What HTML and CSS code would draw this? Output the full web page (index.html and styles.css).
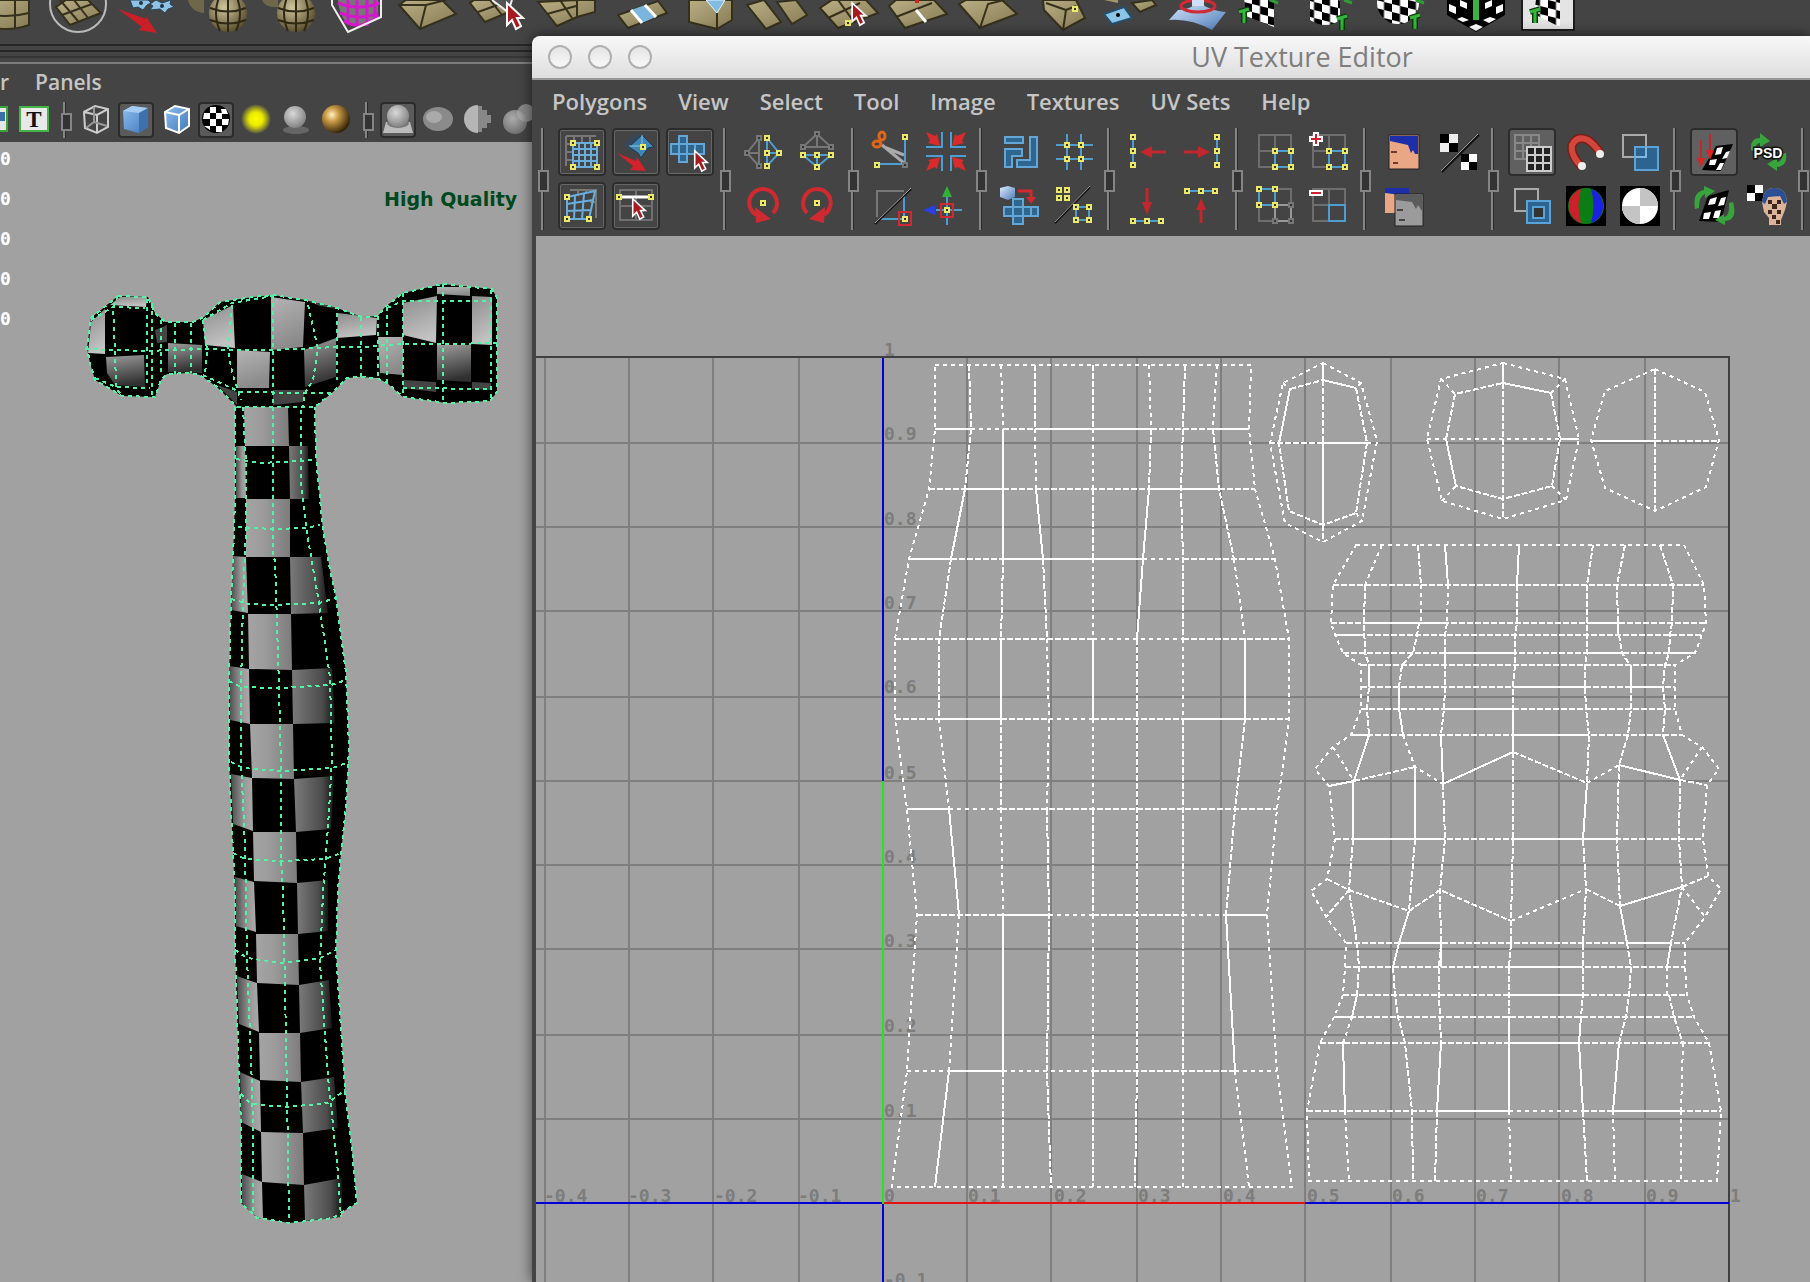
FILE: index.html
```html
<!DOCTYPE html>
<html lang="en">
<head>
<meta charset="utf-8">
<title>UV Texture Editor</title>
<link rel="stylesheet" href="styles.css">
</head>
<body>
<svg class="defs" aria-hidden="true">
  <defs>
    <linearGradient id="tan" x1="0" y1="0" x2="1" y2="1"><stop offset="0" stop-color="#b9ae84"/><stop offset="1" stop-color="#857a52"/></linearGradient>
    <radialGradient id="tanball" cx=".4" cy=".35" r=".65"><stop offset="0" stop-color="#d0c69c"/><stop offset="1" stop-color="#5c5130"/></radialGradient>
    <linearGradient id="sky" x1="0" y1="0" x2="1" y2="1"><stop offset="0" stop-color="#dcebff"/><stop offset="1" stop-color="#4f7db8"/></linearGradient>
    <linearGradient id="cubeface" x1="0" y1="0" x2="1" y2="1"><stop offset="0" stop-color="#8dbdf0"/><stop offset="1" stop-color="#4079b9"/></linearGradient>
    <radialGradient id="glow"><stop offset="0" stop-color="#ff0"/><stop offset=".45" stop-color="#eaea00"/><stop offset="1" stop-color="#ff0" stop-opacity="0"/></radialGradient>
    <radialGradient id="grayball" cx=".4" cy=".35" r=".65"><stop offset="0" stop-color="#d8d8d8"/><stop offset="1" stop-color="#848484"/></radialGradient>
    <radialGradient id="goldball" cx=".35" cy=".35" r=".7"><stop offset="0" stop-color="#fff2c0"/><stop offset=".35" stop-color="#c99a45"/><stop offset="1" stop-color="#2e1d05"/></radialGradient>
    <pattern id="check" width="16" height="16" patternUnits="userSpaceOnUse" patternTransform="skewY(14)"><rect width="16" height="16"/><path fill="#fff" d="M0 0h8v8h-8zM8 8h8v8h-8z"/></pattern>
    <symbol id="cursor" viewBox="0 0 20 28" overflow="visible"><path d="M2 1v22l5-5 4 9 5-3-4-8h6z" fill="#a91a20" stroke="#fff" stroke-width="2"/></symbol>
    <symbol id="pt" viewBox="-3 -3 6 6" overflow="visible"><path d="M-2-2H2V2H-2z" fill="#333" stroke="#ece86a" stroke-width="2"/></symbol>
    <symbol id="gpt" viewBox="-3 -3 6 6" overflow="visible"><path d="M-2-2H2V2H-2z" fill="#333" stroke="#777" stroke-width="2"/></symbol>
    <symbol id="tee" viewBox="0 0 14 16" overflow="visible"><path d="M2 4l10-3M7 3v12" fill="none" stroke="#0a3d0a" stroke-width="6"/><path d="M2 4l10-3M7 3v12" fill="none" stroke="#37b53c" stroke-width="3"/></symbol>
    <symbol id="in" viewBox="0 0 14 14" overflow="visible"><path d="M0 0L9 4L11 2L14 14L2 11L4 9z" fill="#d92b2b"/></symbol>
    <linearGradient id="cellb"><stop offset="0" stop-color="#a4a4a4"/><stop offset=".4" stop-color="#9b9b9b"/><stop offset="1" stop-color="#7c7c7c"/></linearGradient>
    <linearGradient id="cella"><stop offset="0" stop-color="#4c4c4c"/><stop offset=".6" stop-color="#999"/><stop offset="1" stop-color="#aaa"/></linearGradient>
    <linearGradient id="cellc"><stop offset="0" stop-color="#7a7a7a"/><stop offset=".7" stop-color="#4c4c4c"/><stop offset="1" stop-color="#161616"/></linearGradient>
    <linearGradient id="lit" x1="0" y1="0" x2=".3" y2="1"><stop offset="0" stop-color="#8c8c8c"/><stop offset="1" stop-color="#c2c2c2"/></linearGradient>
    <linearGradient id="mid" x1="0" y1="0" x2=".3" y2="1"><stop offset="0" stop-color="#b4b4b4"/><stop offset="1" stop-color="#8a8a8a"/></linearGradient>
    <linearGradient id="dim" x1="0" y1="0" x2=".2" y2="1"><stop offset="0" stop-color="#9c9c9c"/><stop offset="1" stop-color="#303030"/></linearGradient>
  </defs>
</svg>

<main class="desktop">
  <div class="shelf" role="toolbar" aria-label="Polygon shelf">
    <button aria-label="Cylinder"><svg><path d="M8 0h45v25q-22 8-45 0z" fill="url(#tan)" stroke="#35301c" stroke-width="2"/><path d="M22 0v28M39 0v28M8 13q22 6 45 0" fill="none" stroke="#35301c" stroke-width="2"/></svg></button>
    <button aria-label="Plane"><svg><circle cx="32" cy="4" r="28" fill="none" stroke="#bbb" stroke-width="2"/><path d="M10 7L24 25L55 13L42 0H20z" fill="url(#tan)" stroke="#35301c" stroke-width="2"/><path d="M16 15l30-11M28 0l14 18M14 0l18 21" stroke="#35301c" stroke-width="2"/></svg></button>
    <button aria-label="Extract"><svg><path d="M14 0L17 8L22 7L27 10L31 5L35 3L32 0zM34 4L37 6L34 10L44 9L49 13L52 9L58 7L54 4L55 0L46 3L40 0z" fill="#8ec3e4" stroke="#27455c"/><circle cx="25" cy="3" r="2" fill="#234"/><circle cx="46" cy="6" r="2" fill="#234"/><path d="M2 9L30 19L29 15L41 33L22 30L26 27z" fill="#cb1f28"/></svg></button>
    <button aria-label="Smooth"><svg><path d="M2 0q3 12 16 13V0z" fill="#6f6749"/><circle cx="42" cy="13" r="19" fill="url(#tanball)"/><path d="M24 8q18 7 36 0M24 20q18 7 36 0M42-6v38M34-5q-8 18 0 36M50-5q8 18 0 36" fill="none" stroke="#2e2814" stroke-width="2"/></svg></button>
    <button aria-label="Average"><svg><path d="M6 0q3 8 16 7V0z" fill="#6f6749"/><circle cx="40" cy="13" r="19" fill="url(#tanball)"/><path d="M22 8q18 7 36 0M22 20q18 7 36 0M40-6v38M32-5q-8 18 0 36M48-5q8 18 0 36" fill="none" stroke="#2e2814" stroke-width="2"/></svg></button>
    <button aria-label="Cage"><svg><path d="M12 0H52V15Q38 30 20 22Q13 14 12 0z" fill="#777"/><path d="M12 3q20 8 42 0M14 13q20 8 38 0M22 0v24M31 0v26M41 0v26M49 0v20M18 21q18 11 34-6" fill="none" stroke="#d416cc" stroke-width="3"/><path d="M6 0v5L22 32L55 17V0" fill="none" stroke="#eee" stroke-width="2"/></svg></button>
    <button aria-label="Poke"><svg><path d="M3 5L24 29L60 14L46 0H10z" fill="url(#tan)" stroke="#35301c" stroke-width="2"/><path d="M24 29L30 5M30 5L50 0M30 5L3 5" stroke="#35301c" stroke-width="2"/></svg></button>
    <button aria-label="Split"><svg><path d="M4 3L19 22L48 10L38 0H8z" fill="url(#tan)" stroke="#35301c" stroke-width="2"/><path d="M12 12L40 2M24 0l12 15" stroke="#35301c" stroke-width="2"/><path d="M26 0L42 12L46 0" fill="#555" stroke="#eee" stroke-width="2"/><use href="#cursor" x="39" y="2" width="20" height="28"/></svg></button>
    <button aria-label="Bevel"><svg><path d="M2 2L21 26L41 17V0zM41 17L59 12V0H41z" fill="url(#tan)" stroke="#35301c" stroke-width="2"/><path d="M11 14L40 6M24 0l12 18" stroke="#35301c" stroke-width="2"/></svg></button>
    <button aria-label="Bridge"><svg><path d="M12 15L22 28L61 13L52 1z" fill="url(#tan)" stroke="#35301c" stroke-width="2"/><path d="M25 10L36 23L50 17L39 5z" fill="#7bb5de"/><path d="M25 10L36 23M39 5L50 17" stroke="#fff" stroke-width="3"/></svg></button>
    <button aria-label="Wedge"><svg><path d="M13 0V22L41 29V0zM41 29L56 20V0H41z" fill="url(#tan)" stroke="#35301c" stroke-width="2"/><path d="M30 0L41 13L49 0z" fill="#83bce3" stroke="#e6f2fb"/></svg></button>
    <button aria-label="Detach"><svg><path d="M1 5L20 29L35 22L18 0zM31 2L46 24L61 15L50 0z" fill="url(#tan)" stroke="#35301c" stroke-width="2"/></svg></button>
    <button aria-label="Merge"><svg><path d="M4 8L22 28L62 13L50 0H16z" fill="url(#tan)" stroke="#35301c" stroke-width="2"/><path d="M12 18L44 3M22 0l16 22" stroke="#35301c" stroke-width="2"/><use href="#pt" x="29" y="20" width="6" height="6"/><use href="#cursor" x="34" y="2" width="18" height="24"/></svg></button>
    <button aria-label="Insert edge"><svg><path d="M3 6L19 28L61 14L48 0H10z" fill="url(#tan)" stroke="#35301c" stroke-width="2"/><path d="M10 17L46 3" stroke="#35301c" stroke-width="2"/><path d="M30 10L40 22" stroke="#fff" stroke-width="3"/><path d="M31 0v3" stroke="#c22" stroke-width="4"/></svg></button>
    <button aria-label="Triangulate"><svg><path d="M3 4L24 28L61 14L46 0H10z" fill="url(#tan)" stroke="#35301c" stroke-width="2"/><path d="M24 28L32 4L48 0" fill="none" stroke="#35301c" stroke-width="2"/></svg></button>
    <button aria-label="Chamfer"><svg><path d="M17 0L18 10L37 30L59 18L50 0z" fill="url(#tan)" stroke="#35301c" stroke-width="2"/><path d="M37 30L40 10L50 6M40 10L20 3" fill="none" stroke="#35301c" stroke-width="2"/><use href="#pt" x="46" y="6" width="6" height="6"/></svg></button>
    <button aria-label="Duplicate face"><svg><path d="M8 14L16 24L36 18L28 7z" fill="#8cc4e8" stroke="#25506e" stroke-width="2"/><circle cx="22" cy="15" r="2"/><path d="M36 3L44 12L60 5L56 0z" fill="url(#tan)" stroke="#35301c" stroke-width="2"/><path d="M8 0h14v3z" fill="#a1966c"/></svg></button>
    <button aria-label="Soft select"><svg><path d="M12 10L3 20Q24 18 46 30L60 12Q40 10 32 0Q28 9 12 10z" fill="url(#sky)"/><ellipse cx="32" cy="6" rx="17" ry="6" fill="none" stroke="#d12a35" stroke-width="3"/><path d="M26 0h12v6h-12z" fill="#cfe0f5"/></svg></button>
    <button aria-label="Planar mapping"><svg><path d="M8 0L10 16L38 27V0z" fill="url(#check)"/><use href="#tee" x="1" y="8" width="14" height="16"/><path d="M34 0l8 3" stroke="#2f9d35" stroke-width="3"/></svg></button>
    <button aria-label="Cylindrical mapping"><svg><path d="M4 0V20Q20 30 34 20V0z" fill="url(#check)"/><use href="#tee" x="29" y="15" width="14" height="16"/><path d="M38 0l8 3" stroke="#2f9d35" stroke-width="3"/></svg></button>
    <button aria-label="Spherical mapping"><svg><circle cx="22" cy="3" r="21" fill="url(#check)"/><use href="#tee" x="32" y="14" width="14" height="16"/><path d="M40 0l8 3" stroke="#2f9d35" stroke-width="3"/></svg></button>
    <button aria-label="Automatic mapping"><svg><path d="M1 0V15L30 32L59 15V0z" fill="#000"/><path d="M3 4l7 3v7l-7-3zM14 0l7 3v6l-7-3zM57 4l-7 3v7l7-3zM46 0l-7 3v6l7-3zM30 24l7 3-7 4-7-4zM16 17l7 3-6 2-6-3zM44 17l6 2-7 4-6-3z" fill="#fff"/><path d="M30 0v20" stroke="#3bb342" stroke-width="6"/></svg></button>
    <button aria-label="Best plane mapping"><svg><path d="M6-4H58V30H6z" fill="#e4e4e4" stroke="#1d1d1d" stroke-width="2"/><path d="M20 0L18 14L44 27V0z" fill="url(#check)"/><use href="#tee" x="12" y="8" width="14" height="16"/></svg></button>
  </div>
  <div class="rails"><i></i><i></i><i></i></div>
  <nav class="panelmenu"><button>r</button><button>Panels</button></nav>
  <div class="paneltools" role="toolbar" aria-label="Viewport display">
    <button aria-label="Image plane"><svg><rect x="2" y="5" width="29" height="24" fill="#e5e5e5" stroke="#3aa43a" stroke-width="2"/><rect x="22" y="10" width="7" height="9" fill="#3a6ea5"/></svg></button>
    <button aria-label="Title"><svg><rect x="4" y="5" width="28" height="24" fill="#e9e9e9" stroke="#45b545" stroke-width="2"/><text x="18" y="25" class="tee">T</text></svg></button>
    <span class="vsep"></span>
    <button aria-label="Wireframe"><svg><path d="M6 10L17 4L30 7V25L19 31L7 26zM6 10L19 13L30 7M19 13V31" fill="none" stroke="#ccc" stroke-width="2"/><path d="M16 5V20L8 26M16 20L29 24" fill="none" stroke="#999" stroke-width="2"/></svg></button>
    <button class="on" aria-label="Shaded"><svg><path d="M5 9L14 4L30 6V25L21 31L6 27z" fill="url(#cubeface)"/><path d="M5 9L14 4L30 6L21 11z" fill="#a6ccf5"/><path d="M21 11L30 6V25L21 31z" fill="#3d71ad"/></svg></button>
    <button aria-label="Shaded with wire"><svg><path d="M7 10L17 4L31 7V24L21 31L8 26z" fill="url(#cubeface)"/><path d="M7 10L17 4L31 7V24L21 31L8 26zM7 10L21 13L31 7M21 13V31" fill="none" stroke="#fff" stroke-width="2"/></svg></button>
    <button class="on" aria-label="Textured"><svg><circle cx="18" cy="17" r="14"/><path d="M12 5h6v6h-6zM23 7h5l2 5h-6zM6 11l6 0v6H5zM18 11h6v6h-6zM12 17h6v7h-6zM24 17h7l-1 6h-6zM6 24h6v4zM18 24h6v6h-6z" fill="#fff"/></svg></button>
    <button aria-label="Lights"><svg><circle cx="18" cy="17" r="15" fill="url(#glow)"/></svg></button>
    <button aria-label="Shadows"><svg><ellipse cx="18" cy="28" rx="13" ry="4" fill="#666"/><circle cx="17" cy="15" r="11" fill="url(#grayball)"/></svg></button>
    <button aria-label="Quality"><svg><circle cx="18" cy="17" r="14" fill="url(#goldball)"/></svg></button>
    <span class="vsep"></span>
    <button class="on" aria-label="Isolate"><svg><path d="M6 20H30L33 31H3z" fill="#bbb"/><ellipse cx="18" cy="21" rx="11" ry="5" fill="#777"/><circle cx="18" cy="14" r="11" fill="url(#grayball)"/></svg></button>
    <button aria-label="X-ray"><svg><ellipse cx="18" cy="17" rx="15" ry="12" fill="#8a8a8a"/><ellipse cx="14" cy="15" rx="8" ry="6" fill="#aaa"/></svg></button>
    <button aria-label="X-ray joints"><svg><path d="M18 3a14 14 0 0 0 0 28z" fill="#b5b5b5"/><path d="M18 4h4v4h5v5h4v8h-4v5h-5v4h-4z" fill="#888"/></svg></button>
    <button aria-label="Panels overlap"><svg><circle cx="26" cy="11" r="9" fill="#888"/><circle cx="15" cy="20" r="12" fill="url(#grayball)" opacity=".7"/></svg></button>
  </div>
  <section class="viewport" aria-label="Perspective view">
    <ul class="hud"><li>0</li><li>0</li><li>0</li><li>0</li><li>0</li></ul>
    <p class="quality">High Quality</p>
    <svg class="scene" role="img" aria-label="Hammer model">
      <g transform="translate(0 -142)">
        <path d="M235 407V497L233 560L231 600L229 680V760L233 853L235 893V947L237 1013L239 1080L241 1123V1203L257 1218L290 1223L333 1218L357 1203L352 1150L345 1090L340 1013L336 950L338 890L341 853L346 807L349 747L346 673L336 597L330 570L323 530L316 457L315 407z"/>
        <path d="M118 296L148 297L155 313L165 322H193L204 317L220 302L253 297L273 295L305 300L337 308L362 317L378 316L385 307L403 293L443 284L492 289L497 298V392L490 401L447 403L403 397L387 383L377 378L360 377L347 378L333 392L315 407H237L217 387L200 375L190 373L167 374L161 380L155 397L122 396L95 380L90 363L87 348L91 318z"/>
        <g fill="url(#cellb)">
          <path d="M244 407H288L289 446H245z"/><path d="M246 499H290V557H246z"/><path d="M248 614H291L292 670L249 669z"/><path d="M250 724H293L294 779L252 778z"/><path d="M253 832H296L297 883L254 881z"/><path d="M256 934H298L299 985L257 983z"/><path d="M259 1033H300L301 1082L260 1080z"/><path d="M261 1132L303 1133L304 1185L262 1182z"/>
        </g>
        <g fill="url(#cella)">
          <path d="M236 446H245L246 498H236z"/><path d="M233 556L246 557L248 613L231 610z"/><path d="M229 666L249 669L250 724L230 720z"/><path d="M231 774L252 778L253 831L233 824z"/><path d="M235 877L254 882L256 932L236 926z"/><path d="M237 976L257 983L259 1032L239 1024z"/><path d="M240 1072L260 1081L261 1132L241 1122z"/><path d="M242 1174L262 1182L263 1220L252 1214L242 1203z"/>
        </g>
        <g fill="url(#cellc)">
          <path d="M289 446H308L309 499H290z"/><path d="M290 557H321L328 613L291 614z"/><path d="M292 670L332 668L335 723L293 724z"/><path d="M294 779L334 776L331 829L296 832z"/><path d="M297 883L328 880V931L298 934z"/><path d="M299 985L329 980L332 1028L300 1033z"/><path d="M301 1082L334 1077L338 1128L303 1133z"/><path d="M304 1185L342 1178V1217L305 1221z"/>
        </g>
        <g fill="url(#lit)">
          <path d="M91 322L105 309V354L88 353z"/><path d="M110 305L120 297H147L146 307z"/><path d="M203 320L233 305L235 348L205 345z"/><path d="M338 313L377 318L376 335L337 338z"/><path d="M403 303L437 296L436 343L403 335z"/><path d="M472 296L492 297V345L472 344z"/>
        </g>
        <g fill="url(#mid)">
          <path d="M271 297L305 302L303 347L271 350z"/><path d="M237 350L270 352L269 388H237z"/><path d="M378 337H403V375L380 373z"/><path d="M437 287H470V296L437 294z"/>
        </g>
        <g fill="url(#dim)">
          <path d="M106 357L144 355L145 387L115 385L107 373z"/><path d="M168 343L202 345V373L168 372z"/><path d="M304 350L336 338V377L305 387z"/><path d="M437 345H471V382L437 380z"/>
        </g>
        <g fill="#444">
          <path d="M155 330L167 325V342L157 343z"/><path d="M217 385L237 392V405z"/><path d="M307 301L330 306L337 309L320 306z"/><path d="M273 390H305L303 402L273 405z"/><path d="M403 380L436 382V392L403 388z"/><path d="M472 382L491 383V390L472 389z"/>
        </g>
        <g class="wire">
          <path d="M235 407V497L233 560L231 600L229 680V760L233 853L235 893V947L237 1013L239 1080L241 1123V1203L257 1218L290 1223L333 1218L357 1203L352 1150L345 1090L340 1013L336 950L338 890L341 853L346 807L349 747L346 673L336 597L330 570L323 530L316 457L315 407"/>
          <path d="M118 296L148 297L155 313L165 322H193L204 317L220 302L253 297L273 295L305 300L337 308L362 317L378 316L385 307L403 293L443 284L492 289L497 298V392L490 401L447 403L403 397L387 383L377 378L360 377L347 378L333 392L315 407H237L217 387L200 375L190 373L167 374L161 380L155 397L122 396L95 380L90 363L87 348L91 318z"/>
          <path d="M273 295V557L275 560L279 687L281 770V860L283 890L285 990L287 1090L289 1223"/>
          <path d="M243 407L246 463V527L243 603L241 687V760L245 847L247 957L251 1057L253 1123V1213"/>
          <path d="M301 410V483L307 533L319 603L330 677L332 760L328 827L323 893L320 963L328 1077L338 1173L341 1217"/>
          <path d="M236 459L260 463L300 461L316 460M238 527L273 529L306 528L320 525M231 599L249 604L275 605L319 603L336 598M229 681L241 687L279 688L331 685L346 680M231 762L243 768L281 771L333 768L349 762M233 853L245 859L281 861L325 859L341 853M235 950L247 958L283 963L320 958L336 950M241 1094L251 1104L287 1107L328 1103L345 1090"/>
          <path d="M85 349L145 351L203 349L237 350H273L337 347H362L403 344H443L499 343"/>
          <path d="M118 296L113 307L115 350L116 388L122 396M147 299V386M152 303V395M161 320V376M175 323V374M191 323V373M203 320L207 350L205 375M232 305L228 350L232 372L241 400M308 305L318 349L313 380L305 393L303 407M337 313V380M361 317V377M378 316V380M387 307V384M403 293V397M443 284V403M491 290V400"/>
          <path d="M91 320L113 307L145 308M95 378L116 387L150 388M203 320L232 303L273 296M203 375L240 392L305 393H335M387 308L403 301H491M403 388L491 389"/>
        </g>
      </g>
    </svg>
  </section>

  <section class="uvwindow" aria-label="UV Texture Editor">
    <header class="titlebar">
      <button aria-label="Close"></button><button aria-label="Minimize"></button><button aria-label="Zoom"></button>
      <h1>UV Texture Editor</h1>
    </header>
    <nav class="menubar">
      <button>Polygons</button><button>View</button><button>Select</button><button>Tool</button><button>Image</button><button>Textures</button><button>UV Sets</button><button>Help</button>
    </nav>
    <div class="uvtools" role="toolbar" aria-label="UV tools">
      <span class="sep"></span>
      <div class="group three">
        <button class="framed" aria-label="Lattice"><svg><path d="M8 8H38M8 8V38M16 8V15M24 8V15M32 8V15M8 16H15M8 24H15M8 32H15" stroke="#777" stroke-width="2"/><path d="M15 15H39V39H15zM21 15V39M27 15V39M33 15V39M15 21H39M15 27H39M15 33H39" fill="none" stroke="#6aaede" stroke-width="2"/><use href="#pt" x="12" y="12" width="6" height="6"/><use href="#pt" x="36" y="12" width="6" height="6"/><use href="#pt" x="12" y="36" width="6" height="6"/><use href="#pt" x="36" y="36" width="6" height="6"/></svg></button>
        <button class="framed" aria-label="Move shell"><svg><path d="M12 17L21 7L30 8L19 24z" fill="#34485a"/><path d="M17 19L30 7L42 19L36 20L29 30L26 25z" fill="#3f85b5" stroke="#1d3a52"/><path d="M30 7V18H17" fill="none" stroke="#8cc4e8"/><path d="M5 25L24 33L25 29L34 43L18 42L21 38z" fill="#d2222c"/><use href="#pt" x="28" y="16" width="6" height="6"/></svg></button>
        <button class="framed" aria-label="Select shell"><svg><path d="M13 8H21V16H38V26H21V34H13V26H5V16H13z" fill="#2f6690" stroke="#64a7d6" stroke-width="2"/><path d="M13 16V26M21 16V26M29 16V26M13 16H21M13 26H21" stroke="#64a7d6" stroke-width="2"/><use href="#cursor" x="27" y="22" width="16" height="22"/></svg></button>
        <button class="framed" aria-label="Smudge"><svg><path d="M12 8H38V36M20 8V14M28 8V12M32 20H38" fill="none" stroke="#777" stroke-width="2"/><path d="M9 15L37 9L31 37H9zM17 14L16 37M26 12L24 37M9 22L35 18M9 29L33 28" fill="none" stroke="#6aaede" stroke-width="2"/><use href="#pt" x="6" y="12" width="6" height="6"/><use href="#pt" x="6" y="34" width="6" height="6"/><use href="#pt" x="28" y="34" width="6" height="6"/></svg></button>
        <button class="framed" aria-label="Shortest path"><svg><path d="M8 8H40V38H8zM24 8V38M8 24H40" fill="none" stroke="#707070" stroke-width="2"/><path d="M7 15H39" stroke="#fff" stroke-width="3"/><use href="#pt" x="4" y="12" width="6" height="6"/><use href="#pt" x="36" y="12" width="6" height="6"/><use href="#cursor" x="19" y="16" width="16" height="22"/></svg></button>
      </div>
      <span class="sep"></span>
      <div class="group">
        <button aria-label="Flip horizontally"><svg><path d="M19 10L7 25L19 38M19 10V38M7 25H19" fill="none" stroke="#777" stroke-width="2"/><path d="M27 10L39 25L27 38zM27 25H39" fill="none" stroke="#4e9dd0" stroke-width="2"/><use href="#gpt" x="16" y="7" width="6" height="6"/><use href="#gpt" x="4" y="22" width="6" height="6"/><use href="#gpt" x="16" y="35" width="6" height="6"/><use href="#pt" x="24" y="7" width="6" height="6"/><use href="#pt" x="24" y="22" width="6" height="6"/><use href="#pt" x="24" y="35" width="6" height="6"/><use href="#pt" x="36" y="22" width="6" height="6"/></svg></button>
        <button aria-label="Flip vertically"><svg><path d="M9 19L23 6L37 19zM23 6V19" fill="none" stroke="#777" stroke-width="2"/><path d="M9 27L23 39L37 27zM23 27V39" fill="none" stroke="#4e9dd0" stroke-width="2"/><use href="#gpt" x="20" y="3" width="6" height="6"/><use href="#gpt" x="6" y="16" width="6" height="6"/><use href="#gpt" x="34" y="16" width="6" height="6"/><use href="#pt" x="6" y="24" width="6" height="6"/><use href="#pt" x="20" y="24" width="6" height="6"/><use href="#pt" x="34" y="24" width="6" height="6"/><use href="#pt" x="20" y="36" width="6" height="6"/></svg></button>
        <button aria-label="Rotate counterclockwise"><svg><path d="M16 33Q7 26 10 16Q14 7 23 7Q32 7 36 16Q39 25 33 31" fill="none" stroke="#d02a30" stroke-width="4"/><path d="M15 25L31 37L16 41z" fill="#d02a30"/><use href="#pt" x="20" y="18" width="6" height="6"/></svg></button>
        <button aria-label="Rotate clockwise"><svg><path d="M30 33Q39 26 36 16Q32 7 23 7Q14 7 10 16Q7 25 13 31" fill="none" stroke="#d02a30" stroke-width="4"/><path d="M31 25L15 37L30 41z" fill="#d02a30"/><use href="#pt" x="20" y="18" width="6" height="6"/></svg></button>
      </div>
      <span class="sep"></span>
      <div class="group">
        <button aria-label="Cut"><svg><path d="M37 9V36H10" fill="none" stroke="#4e9dd0" stroke-width="2"/><path d="M14 17L36 35M16 19L36 27" stroke="#aaa" stroke-width="3"/><ellipse cx="14" cy="8" rx="3" ry="4" fill="none" stroke="#e0661c" stroke-width="3"/><ellipse cx="9" cy="16" rx="4" ry="3" fill="none" stroke="#e0661c" stroke-width="3"/><use href="#pt" x="34" y="6" width="6" height="6"/><use href="#pt" x="6" y="34" width="6" height="6"/><use href="#gpt" x="34" y="34" width="6" height="6"/></svg></button>
        <button aria-label="Sew"><svg><path d="M4 19H20V4M29 4V19H44M4 28H20V43M29 43V28H44" fill="none" stroke="#4e9dd0" stroke-width="2"/><use href="#in" x="4" y="4" width="14" height="14"/><use href="#in" x="4" y="4" width="14" height="14" transform="matrix(-1 0 0 1 48 0)"/><use href="#in" x="4" y="4" width="14" height="14" transform="matrix(1 0 0 -1 0 47)"/><use href="#in" x="4" y="4" width="14" height="14" transform="matrix(-1 0 0 -1 48 47)"/></svg></button>
        <button aria-label="Split UVs"><svg><path d="M9 35V9H36" fill="none" stroke="#777" stroke-width="2"/><path d="M13 37H36V12" fill="none" stroke="#4e9dd0" stroke-width="2"/><path d="M7 42L43 7" stroke="#111" stroke-width="2"/><path d="M7 41L43 6" stroke="#aaa"/><path d="M31 30H43V43H31z" fill="none" stroke="#d02a30" stroke-width="2"/><use href="#pt" x="34" y="34" width="6" height="6"/></svg></button>
        <button aria-label="Align to axis"><svg><path d="M25 14V43M14 28H40" stroke="#4e9dd0" stroke-width="2"/><path d="M20 15L25 4L30 15z" fill="#31b13a"/><path d="M13 23L1 28L13 33z" fill="#2b3fe0"/><path d="M19 22H31V35H19z" fill="none" stroke="#d02a30" stroke-width="2"/><use href="#pt" x="22" y="25" width="6" height="6"/></svg></button>
      </div>
      <span class="sep"></span>
      <div class="group">
        <button aria-label="Layout"><svg><path d="M9 9H27V15H9zM9 21H26V28H16V39H9zM34 9H41V39H21V32H34z" fill="#2f6690" stroke="#64a7d6" stroke-width="2"/></svg></button>
        <button aria-label="Grid UVs"><svg><path d="M17 6V42M31 6V42M6 17H43M6 31H43" stroke="#4e9dd0" stroke-width="2"/><use href="#pt" x="14" y="14" width="6" height="6"/><use href="#pt" x="28" y="14" width="6" height="6"/><use href="#pt" x="14" y="28" width="6" height="6"/><use href="#pt" x="28" y="28" width="6" height="6"/></svg></button>
        <button aria-label="Unfold"><svg><path d="M4 6L12 4L19 6V15L12 18L4 15z" fill="url(#sky)"/><path d="M22 9H35V16" fill="none" stroke="#d02a30" stroke-width="3"/><path d="M30 15H40L35 22z" fill="#d02a30"/><path d="M17 17H27V25H42V34H27V42H17V34H8V25H17z" fill="#2f6690" stroke="#64a7d6" stroke-width="2"/><path d="M17 25V34M27 25V34M35 25V34M17 25H27M17 34H27" stroke="#64a7d6" stroke-width="2"/></svg></button>
        <button aria-label="Relax"><svg><path d="M5 41L40 5" stroke="#111" stroke-width="2"/><path d="M5 40L40 4" stroke="#999"/><use href="#pt" x="6" y="5" width="6" height="6"/><use href="#pt" x="14" y="5" width="6" height="6"/><use href="#pt" x="6" y="13" width="6" height="6"/><use href="#pt" x="14" y="13" width="6" height="6"/><path d="M26 25H39V38H26z" fill="none" stroke="#4e9dd0" stroke-width="2"/><use href="#pt" x="23" y="22" width="6" height="6"/><use href="#pt" x="36" y="22" width="6" height="6"/><use href="#pt" x="23" y="35" width="6" height="6"/><use href="#pt" x="36" y="35" width="6" height="6"/></svg></button>
      </div>
      <span class="sep"></span>
      <div class="group">
        <button aria-label="Align left"><svg><path d="M9 9V37" stroke="#4e9dd0" stroke-width="2"/><path d="M25 24H42" stroke="#c1272d" stroke-width="3"/><path d="M28 18L16 24L28 30z" fill="#c1272d"/><use href="#pt" x="6" y="6" width="6" height="6"/><use href="#pt" x="6" y="20" width="6" height="6"/><use href="#pt" x="6" y="34" width="6" height="6"/></svg></button>
        <button aria-label="Align right"><svg><path d="M39 9V37" stroke="#4e9dd0" stroke-width="2"/><path d="M6 24H22" stroke="#c1272d" stroke-width="3"/><path d="M20 18L32 24L20 30z" fill="#c1272d"/><use href="#pt" x="36" y="6" width="6" height="6"/><use href="#pt" x="36" y="20" width="6" height="6"/><use href="#pt" x="36" y="34" width="6" height="6"/></svg></button>
        <button aria-label="Align bottom"><svg><path d="M9 39H37" stroke="#4e9dd0" stroke-width="2"/><path d="M23 6V22" stroke="#c1272d" stroke-width="3"/><path d="M18 20L23 33L28 20z" fill="#c1272d"/><use href="#pt" x="6" y="36" width="6" height="6"/><use href="#pt" x="20" y="36" width="6" height="6"/><use href="#pt" x="34" y="36" width="6" height="6"/></svg></button>
        <button aria-label="Align top"><svg><path d="M9 9H37" stroke="#4e9dd0" stroke-width="2"/><path d="M23 26V41" stroke="#c1272d" stroke-width="3"/><path d="M18 28L23 16L28 28z" fill="#c1272d"/><use href="#pt" x="6" y="6" width="6" height="6"/><use href="#pt" x="20" y="6" width="6" height="6"/><use href="#pt" x="34" y="6" width="6" height="6"/></svg></button>
      </div>
      <span class="sep"></span>
      <div class="group">
        <button aria-label="Isolate selection"><svg><path d="M7 7H39V39H7zM23 7V39M7 23H39" fill="none" stroke="#6e6e6e" stroke-width="2"/><path d="M23 23H39V39H23z" fill="none" stroke="#4e9dd0" stroke-width="2"/><use href="#pt" x="20" y="20" width="6" height="6"/><use href="#pt" x="36" y="20" width="6" height="6"/><use href="#pt" x="20" y="36" width="6" height="6"/><use href="#pt" x="36" y="36" width="6" height="6"/></svg></button>
        <button aria-label="Add to isolation"><svg><path d="M7 7H39V39H7zM23 7V39M7 23H39" fill="none" stroke="#6e6e6e" stroke-width="2"/><path d="M23 23H39V39H23z" fill="none" stroke="#4e9dd0" stroke-width="2"/><use href="#pt" x="20" y="20" width="6" height="6"/><use href="#pt" x="36" y="20" width="6" height="6"/><use href="#pt" x="20" y="36" width="6" height="6"/><use href="#pt" x="36" y="36" width="6" height="6"/><path d="M10 4V18M3 11H17" stroke="#fff" stroke-width="6"/><path d="M10 6V16M5 11H15" stroke="#d02030" stroke-width="2"/></svg></button>
        <button aria-label="Toggle isolation"><svg><path d="M7 7H39V39H7zM23 7V39M7 23H39" fill="none" stroke="#6e6e6e" stroke-width="2"/><path d="M7 7H23V23H7z" fill="none" stroke="#4e9dd0" stroke-width="2"/><path d="M23 23H39V39H23z" fill="none" stroke="#999" stroke-width="2"/><use href="#pt" x="4" y="4" width="6" height="6"/><use href="#pt" x="20" y="4" width="6" height="6"/><use href="#pt" x="4" y="20" width="6" height="6"/><use href="#pt" x="20" y="20" width="6" height="6"/><use href="#gpt" x="36" y="20" width="6" height="6"/><use href="#gpt" x="20" y="36" width="6" height="6"/><use href="#gpt" x="36" y="36" width="6" height="6"/></svg></button>
        <button aria-label="Remove from isolation"><svg><path d="M7 7H39V39H7zM23 7V39M7 23H39" fill="none" stroke="#6e6e6e" stroke-width="2"/><path d="M23 23H39V39H23z" fill="#444" stroke="#4e9dd0" stroke-width="2"/><path d="M3 11H17" stroke="#fff" stroke-width="6"/><path d="M5 11H15" stroke="#d02030" stroke-width="2"/></svg></button>
      </div>
      <span class="sep"></span>
      <div class="group">
        <button aria-label="Display image"><svg><rect x="9" y="7" width="30" height="34" fill="#e9a786" stroke="#222"/><path d="M10 8H38V26H35L33 22L31 25L28 17L10 13z" fill="#1c2ea8"/><path d="M11 24h6M13 35h5" stroke="#723a2c" stroke-width="2"/></svg></button>
        <button aria-label="Filter image"><svg><path d="M6 6h9v9H6zM15 15h9v9h-9z" fill="#000"/><path d="M15 6h9v9h-9zM6 15h9v9H6z" fill="#eee"/><path d="M8 44L45 7" stroke="#111" stroke-width="2"/><path d="M7 43L44 6" stroke="#999"/><path d="M27 26h16v16H27z"/><path d="M35 26h8v8h-8zM27 34h8v8h-8z" fill="#fff"/></svg></button>
        <button aria-label="Dim image"><svg><rect x="5" y="6" width="24" height="25" fill="#e9a786"/><path d="M5 6H29V14L5 11z" fill="#1c2ea8"/><rect x="15" y="12" width="28" height="32" fill="#9b9b9b" stroke="#222"/><path d="M16 13H42V29L38 23L36 27L32 20L16 18z" fill="#5c5c5c"/><path d="M17 28h6M19 38h6" stroke="#444" stroke-width="2"/></svg></button>
      </div>
      <span class="sep"></span>
      <div class="group three">
        <button class="on" aria-label="Grid"><svg><path d="M7 7H31V31H7zM15 7V31M23 7V31M7 15H31M7 23H31" fill="none" stroke="#888" stroke-width="2"/><path d="M19 19H43V43H19z" fill="#222"/><path d="M19 19H43V43H19zM27 19V43M35 19V43M19 27H43M19 35H43" fill="none" stroke="#ccc" stroke-width="2"/></svg></button>
        <button aria-label="Pixel snap"><svg><path d="M20 39Q8 27 10 17Q15 7 26 12Q32 16 39 26" fill="none" stroke="#7a1e18" stroke-width="9"/><path d="M20 39Q8 27 10 17Q15 7 26 12Q32 16 39 26" fill="none" stroke="#d2463c" stroke-width="6"/><circle cx="20" cy="38" r="4" fill="#eee"/><circle cx="38" cy="26" r="4" fill="#eee"/></svg></button>
        <button aria-label="Shade UVs"><svg><path d="M7 7H30V29H7z" fill="none" stroke="#aaa" stroke-width="2"/><path d="M19 19H42V42H19z" fill="#2c648f" stroke="#5ba3d6" stroke-width="2"/><path d="M19 29H30V19" fill="none" stroke="#7db8e0" stroke-width="2"/></svg></button>
        <button aria-label="Texture borders"><svg><path d="M7 7H30V29H7z" fill="none" stroke="#aaa" stroke-width="2"/><path d="M19 19H42V41H19z" fill="#2c648f" stroke="#5ba3d6" stroke-width="2"/><path d="M25 25H36V36H25z" fill="#333" stroke="#5ba3d6" stroke-width="2"/></svg></button>
        <button aria-label="RGB channels"><svg><rect x="4" y="4" width="40" height="40"/><circle cx="24" cy="24" r="18" fill="#0a7d14"/><path d="M19 7Q14 24 19 41A18 18 0 0 1 19 7z" fill="#cf1f2b"/><path d="M29 7Q34 24 29 41A18 18 0 0 0 29 7z" fill="#1c20e0"/></svg></button>
        <button aria-label="Alpha channel"><svg><rect x="4" y="4" width="40" height="40"/><circle cx="24" cy="24" r="18" fill="#fff"/><path d="M24 6A18 18 0 0 1 42 24H24zM24 42A18 18 0 0 1 6 24H24z" fill="#c4c4c4"/></svg></button>
      </div>
      <span class="sep"></span>
      <div class="group">
        <button class="on" aria-label="Bake"><svg><path d="M26 18L43 16L31 43L12 42z" fill="#000"/><path d="M27 20l6-1-2 7-6 1zM36 24l4-1-3 7-5 1zM20 32l7-1-2 6-6 0zM30 35l4 0-3 7-5 0z" fill="#fff"/><path d="M11 12V34M20 6V24" stroke="#c1272d" stroke-width="2"/><path d="M7 30H15L11 39zM16 22H24L20 32z" fill="#d22"/></svg></button>
        <button aria-label="Update PSD"><svg><path d="M7 22Q6 10 16 10V5L26 13L16 19V15Q11 15 11 24zM42 25Q44 38 33 39V43L23 36L33 30V34Q38 34 38 26z" fill="#37a53c"/><text x="24" y="30" class="psd">PSD</text></svg></button>
        <button aria-label="Reload"><svg><path d="M18 14L39 8L31 40L9 39z" fill="#000"/><path d="M20 17l7-2-2 7-7 1zM31 16l5-1-2 8-6 1zM14 31l7-1-2 7-6 0zM25 29l6-1-2 8-6 0z" fill="#fff"/><path d="M5 27Q2 10 14 8V4L25 9L15 16V12Q9 14 9 26zM43 20Q48 38 35 39V43L25 38L34 32V35Q40 34 39 21z" fill="#37a53c"/></svg></button>
        <button aria-label="Apply checker"><svg><path d="M3 3h16v16H3z" fill="#fff"/><path d="M3 3h8v8H3zM11 11h8v8h-8z"/><path d="M18 20Q20 5 31 6Q42 6 43 20L41 28L37 38V43H25V36L20 30z" fill="#dcb49a"/><path d="M18 20Q20 5 31 6Q42 6 43 20L40 22L36 14L24 15L21 22z" fill="#2c4f96"/><path d="M24 18h4v4h-4zM33 18h4v4h-4zM28 22h5v5h-5zM24 28h4v4h-4zM33 28h4v4h-4zM28 33h4v4h-4zM32 38h4v4h-4z" fill="#3d251d"/></svg></button>
      </div>
      <span class="sep"></span>
    </div>
    <svg class="canvas" role="img" aria-label="UV layout">
      <g transform="translate(-536 -236)">
        <path class="grid" d="M545 357V1400M629 357V1400M713 357V1400M799 357V1400M967 357V1400M1051 357V1400M1137 357V1400M1221 357V1400M1305 357V1400M1391 357V1400M1475 357V1400M1559 357V1400M1645 357V1400M536 443H1729M536 527H1729M536 611H1729M536 697H1729M536 781H1729M536 865H1729M536 949H1729M536 1035H1729M536 1119H1729M536 1287H1729"/>
        <path class="limit" d="M536 357H1729V1400"/>
        <g class="labels">
          <text x="884" y="356">1</text><text x="884" y="440">0.9</text><text x="884" y="525">0.8</text><text x="884" y="609">0.7</text><text x="884" y="693">0.6</text><text x="884" y="779">0.5</text><text x="884" y="863">0.4</text><text x="884" y="947">0.3</text><text x="884" y="1032">0.2</text><text x="884" y="1117">0.1</text><text x="884" y="1286">-0.1</text>
          <text x="544" y="1202">-0.4</text><text x="628" y="1202">-0.3</text><text x="714" y="1202">-0.2</text><text x="798" y="1202">-0.1</text><text x="884" y="1202">0</text><text x="968" y="1202">0.1</text><text x="1054" y="1202">0.2</text><text x="1138" y="1202">0.3</text><text x="1223" y="1202">0.4</text><text x="1307" y="1202">0.5</text><text x="1392" y="1202">0.6</text><text x="1476" y="1202">0.7</text><text x="1561" y="1202">0.8</text><text x="1646" y="1202">0.9</text><text x="1730" y="1202">1</text>
        </g>
        <path class="blue" d="M883 358V781M883 1203V1400M536 1203H883M1305 1203H1729"/>
        <path class="red" d="M883 1203H1305"/>
        <path class="green" d="M883 781V1204"/>

        <g class="mesh dots">
          <path d="M935 365H1251L1249 429L1255 489L1275 559L1289 639V719L1277 809L1267 915L1277 1071L1292 1187H892L907 1071L917 915L907 809L895 719V639L909 559L929 489L935 429z"/>
          <path d="M971 429H1003M1143 559H1183M1093 639H1183M1049 719H1093M949 809H1001M1049 915H1093M1183 915H1226M907 1071H949M1003 1071H1093M1235 1071H1277"/>
          <path d="M1001 365L1003 429M1035 429L1036 489M1093 429V489M1093 559V639M1093 719V809M1093 915V1071M1149 365L1151 429M1217 365L1213 429M1234 559L1245 639M1235 1071L1249 1187M939 719L949 809M959 915L949 1071M1001 809L1003 915M1047 639L1049 719L1047 809M1183 639V719M1183 1071V1187"/>
          <path d="M1323 363L1361 383L1377 441L1362 521L1323 542L1285 523L1270 443L1283 383zM1283 383L1290 389M1361 383L1356 388M1356 513L1362 521"/>
          <path d="M1503 363L1565 379L1579 439L1566 500L1503 519L1442 501L1427 439L1441 379zM1441 379L1455 394M1565 379L1551 393M1566 500L1552 486M1442 501L1456 486M1427 439H1560"/>
          <path d="M1655 369L1705 392L1719 440L1706 487L1655 511L1605 488L1591 440L1605 391z"/>
          <path d="M1356 545H1684L1704 585L1706 623L1702 635L1695 653L1675 665V709L1682 735L1702 747L1719 769L1707 785L1703 839L1708 876L1721 889L1705 917L1685 943V967L1687 995L1694 1017L1709 1043L1721 1111L1717 1181H1309L1307 1111L1320 1043L1334 1017L1343 995L1345 967L1346 943L1326 917L1311 891L1327 879L1335 839L1329 786L1315 769L1333 747L1351 735L1361 709V665L1343 653L1335 635L1331 623L1333 585z"/>
          <path d="M1382 545L1365 585M1403 735L1415 767L1443 784M1587 783L1619 765M1421 585V623M1448 585L1447 623M1333 747L1354 781M1702 747L1680 780M1682 887L1705 917M1511 921L1586 889M1343 1043L1352 1017M1345 1111L1349 1181M1509 1111L1511 1181M1613 1111L1615 1181M1681 1111V1181M1683 1043L1681 1111M1667 967V995M1509 1111H1583"/>
        </g>
        <g class="mesh dashes">
          <path d="M1003 429H1035M1151 429H1213M929 489H965M1003 489H1149M1219 489H1255M951 559H1003M1183 559H1275M895 639H1093M1183 639H1289M895 719H939M1001 719H1049M1093 719H1183M1245 719H1289M1001 809H1277M917 915H1003M1093 915H1183M1093 1071H1235"/>
          <path d="M969 365L971 429L965 489M951 559L939 639V719M1003 559L1001 639M1001 719V809M1003 1071V1187M1035 365V429M1043 559L1047 639M1047 809L1049 915L1047 1071L1051 1187M1093 365V429M1093 489V559M1093 809V915M1093 1071V1187M1151 429L1149 489M1137 639V1071L1135 1187M1185 365L1181 489L1183 559V639M1183 719V1071M1213 429L1219 489L1234 559M1245 719L1235 809L1226 915"/>
          <path d="M1323 380V443M1323 525V542M1269 443H1323M1356 388L1367 443L1356 513L1323 525L1289 511L1279 443M1290 389L1323 380"/>
          <path d="M1503 383V519M1551 393L1560 439L1552 486L1503 499L1456 486M1446 439L1455 394L1503 383"/>
          <path d="M1655 369V511M1655 441H1719"/>
          <path d="M1333 585H1704M1331 623H1706M1335 635H1702M1343 653H1695M1361 665H1675M1361 687H1675M1361 709H1675M1351 735H1682M1335 839H1703M1346 943H1685M1345 967H1685M1343 995H1687M1334 1017H1694M1320 1043H1709M1307 1111H1509M1583 1111H1721"/>
          <path d="M1365 585L1364 623L1365 653L1369 665V687L1367 709L1369 735M1353 839L1349 890L1357 943L1359 967L1357 995"/>
          <path d="M1418 545L1421 585M1419 623L1417 635L1413 653L1402 665L1399 687M1415 839L1409 911M1393 967L1395 995L1398 1017L1405 1043L1412 1111L1413 1181"/>
          <path d="M1447 623L1445 635V687L1444 709L1441 735M1443 784L1445 839L1440 890L1441 943L1439 967V995L1441 1043M1437 1111L1435 1181"/>
          <path d="M1517 585V623L1515 635V665L1513 687V709M1513 752V839L1511 921V943L1509 967V1017"/>
          <path d="M1593 545L1587 585V653L1585 665V687L1586 709L1589 735L1587 783L1583 839L1586 889L1583 943V995L1581 1017M1583 1111L1587 1181"/>
          <path d="M1625 545L1617 585L1618 623M1619 635L1622 653L1630 665M1631 687V709L1628 735L1619 765L1617 839L1620 906M1627 943L1631 967L1629 995L1626 1017L1619 1043"/>
          <path d="M1660 545L1673 585L1672 623L1670 635L1669 653L1665 665L1663 687L1665 709L1663 735M1680 780L1679 839L1682 887L1671 943M1669 995L1674 1017L1683 1043"/>
          <path d="M1354 781L1415 767M1513 752L1587 783M1680 780L1707 785M1327 879L1349 890L1409 911L1440 890L1511 921M1586 889L1620 906M1682 887L1708 876M1349 890L1326 917"/>
        </g>
        <g class="mesh">
          <path d="M935 429H971M1035 429H1151M1213 429H1249M965 489H1003M1149 489H1219M909 559H951M1003 559H1143M939 719H1001M1183 719H1245M907 809H949M1003 915H1049M1226 915H1267M949 1071H1003"/>
          <path d="M965 489L951 559M949 809L959 915M949 1071L935 1187M1003 429V559M1001 639V719M1003 915V1071M1036 489L1043 559M1093 639V719M1149 489L1143 559L1137 639M1245 639V719M1226 915L1235 1071"/>
          <path d="M1323 363V380M1323 443V525M1323 443H1371M1323 380L1356 388M1279 443L1290 389"/>
          <path d="M1503 363V383L1551 393M1446 439L1456 486M1560 439H1579M1591 441H1655"/>
          <path d="M1445 545L1448 585M1519 545L1517 585M1365 623H1447M1587 623H1618V635M1335 635H1365M1445 653H1515M1587 653H1622M1669 653H1695M1445 653V665M1369 665V687M1399 687V709L1403 735M1513 687H1585M1631 687H1663M1631 665V687M1445 709H1513V752M1351 735H1369L1354 781M1513 735H1589M1441 735L1443 784L1513 752M1663 735L1680 780L1619 765M1329 786L1354 781"/>
          <path d="M1353 781V839M1415 767V839M1353 839H1445M1513 839H1617M1587 783L1583 839M1409 911L1399 943L1393 967M1399 943H1441V967M1620 906L1627 943H1671L1667 967M1620 906L1682 887M1509 967H1583M1509 995H1583M1357 995L1352 1017H1334M1343 1043L1345 1111M1441 1043L1437 1111H1509V1017M1509 1043H1579M1581 1017L1579 1043L1583 1111M1619 1043L1613 1111H1681"/>
        </g>
      </g>
    </svg>
  </section>
</main>
</body>
</html>
```
FILE: styles.css
```css
* { box-sizing: border-box; }
body {
  margin: 0;
  background: #444;
  font-family: "Open Sans", "Noto Sans", sans-serif;
}
button {
  margin: 0;
  padding: 0;
  border: 0;
  background: none;
  color: inherit;
  font: inherit;
}
button svg { display: block; width: 100%; height: 100%; }
.defs { position: absolute; width: 0; height: 0; }

.desktop {
  position: relative;
  display: flex;
  flex-direction: column;
  height: 100vh;
  overflow: hidden;
}

.shelf {
  display: flex;
  flex: none;
  height: 44px;
  margin-left: -24px;
}
.shelf button { flex: none; width: 70px; height: 44px; }

.rails {
  display: flex;
  flex-direction: column;
  gap: 4px;
  flex: none;
  height: 20px;
  border-bottom: 2px solid #7c7c7c;
}
.rails i { height: 2px; background: #262626; }
.rails i:last-child { background: #353535; }

.panelmenu {
  display: flex;
  flex: none;
  gap: 26px;
  height: 38px;
  padding-bottom: 2px;
  align-items: center;
  color: #c6c6c6;
  font-size: 21px;
  font-weight: 600;
  line-height: 28px;
}

.paneltools {
  display: flex;
  flex: none;
  gap: 4px;
  height: 40px;
  margin-left: -24px;
}
.paneltools button { flex: none; width: 36px; height: 36px; border-radius: 4px; }
.paneltools .on { background: #5a5a5a; box-shadow: inset 0 0 0 2px #2b2b2b; }
.vsep { flex: none; width: 18px; height: 36px; position: relative; }
.vsep::before, .sep::before {
  content: "";
  position: absolute;
  top: 0;
  bottom: 0;
  left: 3px;
  width: 3px;
  background: linear-gradient(90deg, #858585 66%, #2a2a2a 66%);
}
.vsep::after, .sep::after {
  content: "";
  position: absolute;
  left: 0;
  top: 50%;
  width: 7px;
  height: 18px;
  margin-top: -9px;
  border: 2px solid #858585;
  background: #333;
}
.vsep::before { left: 7px; }
.vsep::after { left: 5px; height: 14px; margin-top: -7px; }
.tee { font: bold 23px "Liberation Serif", serif; text-anchor: middle; fill: #111; }
.psd {
  font: bold 14px "Liberation Sans", sans-serif;
  text-anchor: middle;
  fill: #fff;
  stroke: #111;
  stroke-width: 3px;
  paint-order: stroke;
}

.viewport {
  position: relative;
  flex: 1;
  min-height: 0;
  background: #a1a1a1;
}
.scene { display: block; width: 100%; height: 100%; }
.hud {
  position: absolute;
  left: 0;
  top: -3px;
  margin: 0;
  padding: 0;
  list-style: none;
  color: #fff;
  font: bold 18px/40px "DejaVu Sans Mono", monospace;
}
.quality {
  position: absolute;
  left: 384px;
  top: 43px;
  margin: 0;
  color: #00491f;
  font: bold 19px/28px "DejaVu Sans", sans-serif;
}
.wire path {
  fill: none;
  stroke: #4ff5a5;
  stroke-width: 2;
  stroke-dasharray: 4 4;
  shape-rendering: crispEdges;
}

.uvwindow {
  position: absolute;
  inset: 36px 0 0 532px;
  display: flex;
  flex-direction: column;
  background: #444;
  border-radius: 8px 0 0 0;
  box-shadow: 0 0 14px rgba(0, 0, 0, .6);
}
.titlebar {
  display: flex;
  flex: none;
  align-items: center;
  gap: 16px;
  height: 44px;
  padding-left: 16px;
  border-bottom: 2px solid #999;
  border-radius: 8px 0 0 0;
  background: linear-gradient(#f8f8f8, #dedede);
}
.titlebar button {
  width: 24px;
  height: 24px;
  border: 2px solid #b0b0b0;
  border-radius: 50%;
  background: linear-gradient(#e4e4e4, #f8f8f8);
}
.titlebar h1 {
  flex: 1;
  margin: 0;
  padding-left: 126px;
  color: #7e7e7e;
  font-size: 27px;
  font-weight: 400;
  line-height: 36px;
  text-align: center;
}
.menubar {
  display: flex;
  flex: none;
  align-items: center;
  gap: 31px;
  height: 45px;
  padding: 0 0 4px 20px;
  color: #c6c6c6;
  font-size: 22px;
  font-weight: 600;
  line-height: 28px;
}
.uvtools {
  display: flex;
  flex: none;
  gap: 6px;
  height: 111px;
  padding: 3px 0 6px 6px;
  overflow: hidden;
}
.sep { position: relative; flex: none; width: 14px; height: 102px; }
.group {
  display: grid;
  flex: none;
  grid-template-columns: repeat(2, 48px);
  grid-auto-rows: 48px;
  gap: 6px;
}
.three { grid-template-columns: repeat(3, 48px); }
.group button { border-radius: 4px; }
.framed { box-shadow: inset 0 0 0 2px #2c2c2c, inset 0 0 0 3px #666; }
.group .on { background: #606060; box-shadow: inset 0 0 0 2px #2c2c2c; }

.canvas {
  display: block;
  flex: 1;
  min-height: 0;
  margin-left: 4px;
  background: #a1a1a1;
}
.canvas path { fill: none; stroke-width: 2; shape-rendering: crispEdges; }
.grid { stroke: #7f7f7f; }
.limit { stroke: #404040; }
.blue { stroke: #0000d8; }
.red { stroke: #e81010; }
.green { stroke: #1ee81e; }
.labels { fill: #7d7d7d; font: bold 18px "DejaVu Sans Mono", monospace; }
.mesh path { stroke: #fff; }
.dots path { stroke-dasharray: 4 4; }
.dashes path { stroke-dasharray: 6 2; }
```
